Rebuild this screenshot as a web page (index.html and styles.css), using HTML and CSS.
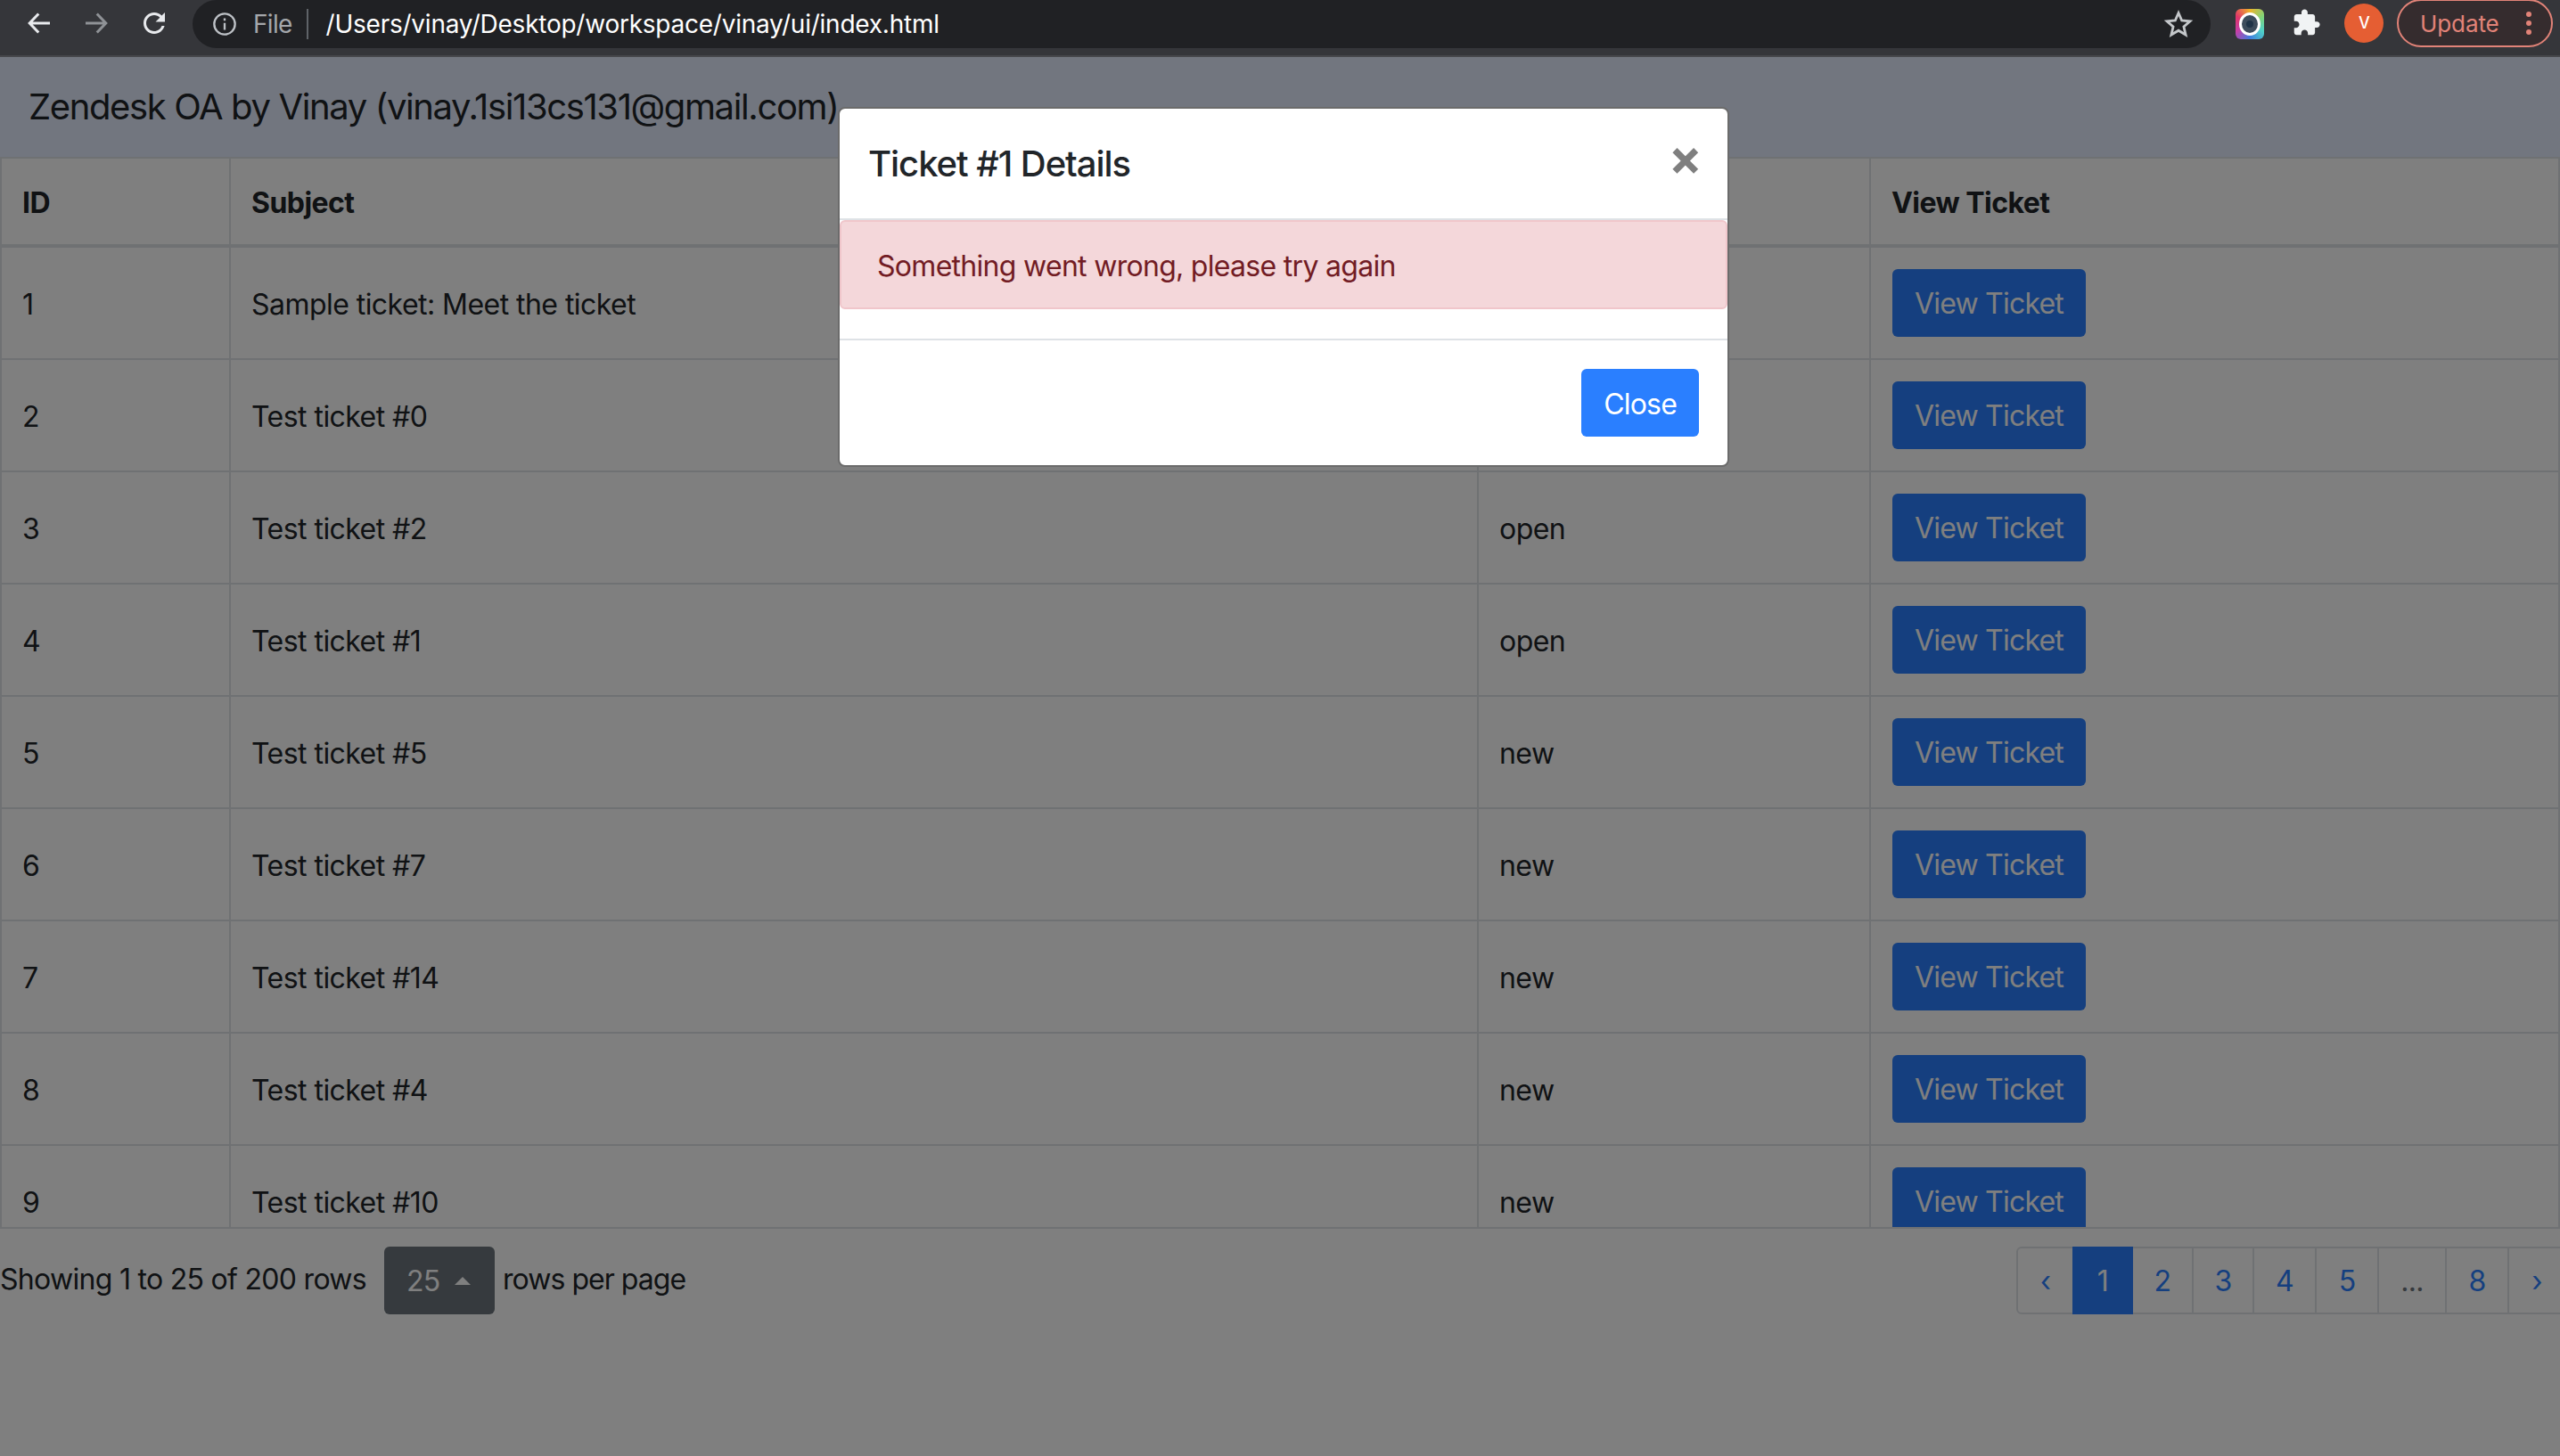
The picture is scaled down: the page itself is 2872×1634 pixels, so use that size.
FILE: index.html
```html
<!DOCTYPE html>
<html lang="en">
<head>
  <meta charset="UTF-8" />
  <title>Zendesk OA by Vinay</title>
  <link rel="stylesheet" href="styles.css">
</head>
<body>
  <div class="toolbar">
    <svg class="nav-icon" viewBox="0 0 24 24"><path d="M20 12H5M11.5 5L4.8 12l6.7 7" fill="none" stroke="#e8eaed" stroke-width="2"/></svg>
    <svg class="nav-icon dim" viewBox="0 0 24 24"><path d="M4 12h15M12.5 5l6.7 7-6.7 7" fill="none" stroke="#8f9296" stroke-width="2"/></svg>
    <svg class="nav-icon" viewBox="0 0 24 24"><path fill="#e8eaed" d="M17.65 6.35C16.2 4.9 14.21 4 12 4c-4.42 0-7.99 3.58-7.99 8s3.57 8 7.99 8c3.73 0 6.84-2.55 7.73-6h-2.08c-.82 2.33-3.04 4-5.65 4-3.31 0-6-2.69-6-6s2.69-6 6-6c1.66 0 3.14.69 4.22 1.78L13 11h7V4l-2.35 2.35z"/></svg>
    <div class="omnibox">
      <svg class="info-icon" viewBox="0 0 24 24"><circle cx="12" cy="12" r="10" fill="none" stroke="#bdc1c6" stroke-width="2"/><path d="M12 11v6.5M12 6.5v2.2" stroke="#bdc1c6" stroke-width="2"/></svg>
      <span class="scheme">File</span>
      <span class="url">/Users/vinay/Desktop/workspace/vinay/ui/index.html</span>
      <svg class="star-icon" viewBox="0 0 24 24"><path d="M12 3.2l2.6 6 6.5.6-4.9 4.3 1.5 6.4L12 17.1l-5.7 3.4 1.5-6.4-4.9-4.3 6.5-.6z" fill="none" stroke="#c4c7ca" stroke-width="2"/></svg>
    </div>
    <div class="ext-icon"><div class="ext-ring"><div class="ext-lens"></div></div></div>
    <svg class="puzzle-icon" viewBox="0 0 24 24"><path fill="#f1f3f4" d="M20.5 11H19V7c0-1.1-.9-2-2-2h-4V3.5C13 2.12 11.88 1 10.5 1S8 2.12 8 3.5V5H4c-1.1 0-1.99.9-1.99 2v3.8H3.5c1.49 0 2.7 1.21 2.7 2.7s-1.21 2.7-2.7 2.7H2V20c0 1.1.9 2 2 2h3.8v-1.5c0-1.49 1.21-2.7 2.7-2.7 1.49 0 2.7 1.21 2.7 2.7V22H17c1.1 0 2-.9 2-2v-4h1.5c1.38 0 2.5-1.12 2.5-2.5S21.88 11 20.5 11z"/></svg>
    <div class="avatar">V</div>
    <div class="update">
      <span>Update</span>
      <div class="dots"><i></i><i></i><i></i></div>
    </div>
  </div>

  <div class="page">
    <div class="navbar">Zendesk OA by Vinay (vinay.1si13cs131@gmail.com)</div>

    <div class="table-wrap">
      <table class="tickets">
        <colgroup>
          <col class="col-id"><col class="col-subject"><col class="col-status"><col>
        </colgroup>
        <thead>
          <tr><th>ID</th><th>Subject</th><th>Status</th><th>View Ticket</th></tr>
        </thead>
        <tbody>
          <tr><td>1</td><td>Sample ticket: Meet the ticket</td><td>open</td><td class="cell-btn"><button class="btn">View Ticket</button></td></tr>
          <tr><td>2</td><td>Test ticket #0</td><td>open</td><td class="cell-btn"><button class="btn">View Ticket</button></td></tr>
          <tr><td>3</td><td>Test ticket #2</td><td>open</td><td class="cell-btn"><button class="btn">View Ticket</button></td></tr>
          <tr><td>4</td><td>Test ticket #1</td><td>open</td><td class="cell-btn"><button class="btn">View Ticket</button></td></tr>
          <tr><td>5</td><td>Test ticket #5</td><td>new</td><td class="cell-btn"><button class="btn">View Ticket</button></td></tr>
          <tr><td>6</td><td>Test ticket #7</td><td>new</td><td class="cell-btn"><button class="btn">View Ticket</button></td></tr>
          <tr><td>7</td><td>Test ticket #14</td><td>new</td><td class="cell-btn"><button class="btn">View Ticket</button></td></tr>
          <tr><td>8</td><td>Test ticket #4</td><td>new</td><td class="cell-btn"><button class="btn">View Ticket</button></td></tr>
          <tr><td>9</td><td>Test ticket #10</td><td>new</td><td class="cell-btn"><button class="btn">View Ticket</button></td></tr>
        </tbody>
      </table>
    </div>

    <div class="table-footer">
      <div class="rows-info">
        <span>Showing 1 to 25 of 200 rows</span>
        <div class="page-size"><span>25</span><i class="caret"></i></div>
        <span>rows per page</span>
      </div>
      <ul class="pagination">
        <li class="end">‹</li>
        <li class="active">1</li>
        <li>2</li>
        <li>3</li>
        <li class="wide">4</li>
        <li class="wide">5</li>
        <li class="gap">...</li>
        <li class="wide">8</li>
        <li class="end">›</li>
      </ul>
    </div>

    <div class="backdrop"></div>

    <div class="modal">
      <div class="modal-header">
        <h5>Ticket #1 Details</h5>
        <span class="modal-x">×</span>
      </div>
      <div class="alert">Something went wrong, please try again</div>
      <div class="modal-body"></div>
      <div class="modal-footer">
        <button class="btn">Close</button>
      </div>
    </div>
  </div>
</body>
</html>
```

FILE: styles.css
```css
* {
  box-sizing: border-box;
}
html, body {
  margin: 0;
  height: 100%;
  overflow: hidden;
}
body {
  font-family: Inter, "Liberation Sans", sans-serif;
  font-size: 32px;
  letter-spacing: -0.022em;
  color: #212529;
  background: #fff;
}

/* browser chrome */
.toolbar {
  display: flex;
  align-items: flex-start;
  height: 64px;
  padding-left: 26px;
  background: #35363a;
  border-bottom: 2px solid #46474b;
}
.nav-icon {
  width: 36px;
  height: 36px;
  margin: 8px 28px 0 0;
  flex: none;
}
.nav-icon.dim {
  margin-right: 29px;
}
.omnibox {
  display: flex;
  align-items: center;
  width: 2264px;
  height: 54px;
  margin-left: -3px;
  padding: 0 19px 0 22px;
  background: #202124;
  border-radius: 27px;
  flex: none;
}
.info-icon {
  width: 28px;
  height: 28px;
  margin-right: 18px;
}
.scheme {
  padding-right: 16px;
  margin-right: 20px;
  font-size: 28px;
  color: #a4a7ab;
  border-right: 2px solid #5f6368;
}
.url {
  flex: 1;
  font-size: 28px;
  letter-spacing: -0.24px;
  color: #fff;
}
.star-icon {
  width: 34px;
  height: 34px;
}
.ext-icon {
  width: 32px;
  height: 34px;
  margin: 10px 0 0 28px;
  padding: 4px;
  border-radius: 6px;
  background: conic-gradient(#f0b429, #7fd47a, #4fd0c8, #3f7de0, #c53fa8, #e0356a, #f0b429);
  flex: none;
}
.ext-ring {
  width: 24px;
  height: 26px;
  border: 3px solid #fff;
  border-radius: 50%;
  background: #3d4c5c;
  display: flex;
  align-items: center;
  justify-content: center;
}
.ext-lens {
  width: 8px;
  height: 8px;
  border-radius: 50%;
  background: #1f3347;
}
.puzzle-icon {
  width: 33px;
  height: 33px;
  margin: 9px 0 0 31px;
  flex: none;
}
.avatar {
  width: 44px;
  height: 44px;
  margin: 4px 0 0 26px;
  border-radius: 50%;
  background: #e55e33;
  color: #fff;
  font-size: 18px;
  font-weight: 500;
  text-align: center;
  line-height: 44px;
  flex: none;
}
.update {
  display: flex;
  align-items: center;
  justify-content: space-between;
  width: 175px;
  height: 54px;
  margin: -1px 0 0 15px;
  padding: 0 22px 0 24px;
  border: 2px solid #e28378;
  border-radius: 27px;
  background: #352c2e;
  color: #e28378;
  font-size: 26px;
  letter-spacing: -0.1px;
  flex: none;
}
.dots {
  display: flex;
  flex-direction: column;
  gap: 4px;
}
.dots i {
  display: block;
  width: 6px;
  height: 6px;
  border-radius: 50%;
  background: #e28378;
}

/* page */
.page {
  position: relative;
  height: 1570px;
}
.navbar {
  height: 112px;
  padding: 0 32px;
  font-size: 40px;
  letter-spacing: -1.38px;
  line-height: 112px;
  background: #e5ecff;
}
.table-wrap {
  height: 1203px;
  overflow: hidden;
  border-bottom: 2px solid #dee2e6;
}
.tickets {
  width: 100%;
  table-layout: fixed;
  border-collapse: collapse;
  letter-spacing: -0.017em;
}
.col-id {
  width: 257px;
}
.col-subject {
  width: 1400px;
}
.col-status {
  width: 440px;
}
.tickets th, .tickets td {
  padding: 26px 24px 22px 23px;
  border: 2px solid #dee2e6;
  text-align: left;
  vertical-align: middle;
  line-height: 48px;
}
.tickets th {
  font-weight: 700;
  border-bottom-width: 4px;
}
.tickets .cell-btn {
  padding: 24px;
}
.btn {
  display: block;
  height: 76px;
  padding: 2px 25px 0;
  border: 0;
  border-radius: 6px;
  background: #2a7fff;
  color: #fff;
  font: inherit;
  letter-spacing: -0.025em;
}

.table-footer {
  display: flex;
  justify-content: space-between;
  margin-top: 20px;
}
.rows-info {
  display: flex;
  align-items: center;
  height: 76px;
}
.rows-info > span {
  margin-top: -4px;
}
.page-size {
  display: flex;
  align-items: center;
  width: 124px;
  height: 76px;
  margin: 0 9px 0 20px;
  padding-left: 25px;
  border-radius: 6px;
  background: #6c757d;
  color: #fff;
}
.rows-info > span:last-child {
  letter-spacing: -0.03em;
}
.caret {
  margin-left: 16px;
  border-left: 9px solid transparent;
  border-right: 9px solid transparent;
  border-bottom: 9px solid #fff;
}
.pagination {
  display: flex;
  height: 76px;
  margin: 0 -7px 0 0;
  padding: 0;
  list-style: none;
  color: #2a7fff;
}
.pagination li {
  width: 70px;
  margin-left: -2px;
  border: 2px solid #dee2e6;
  text-align: center;
  line-height: 74px;
}
.pagination .wide {
  width: 72px;
}
.pagination .end {
  width: 66px;
}
.pagination .end:first-child {
  width: 65px;
  margin-left: 0;
  border-radius: 6px 0 0 6px;
}
.pagination .active {
  position: relative;
  width: 68px;
  background: #2a7fff;
  border-color: #2a7fff;
  color: #fff;
}
.pagination .gap {
  width: 78px;
  color: #6c757d;
}

/* modal */
.backdrop {
  position: absolute;
  inset: 0;
  background: rgba(0, 0, 0, 0.5);
}
.modal {
  position: absolute;
  top: 56px;
  left: 940px;
  width: 1000px;
  height: 404px;
  border: 2px solid #6b6b6b;
  border-radius: 8px;
  background: #fff;
}
.modal-header {
  display: flex;
  align-items: center;
  justify-content: space-between;
  height: 125px;
  padding: 0 32px;
  border-bottom: 2px solid #dee2e6;
}
.modal-header h5 {
  margin: 0;
  font-size: 40px;
  font-weight: 500;
  letter-spacing: -1.05px;
}
.modal-x {
  margin: -14px -3px 0 0;
  font-size: 56px;
  font-weight: 700;
  color: #7f7f7f;
  line-height: 1;
}
.alert {
  height: 100px;
  padding: 0 40px;
  line-height: 100px;
  color: #721c24;
  background: #f4d7da;
  border: 2px solid #f0c6cb;
  border-radius: 6px;
}
.modal-body {
  height: 35px;
  border-bottom: 2px solid #dee2e6;
}
.modal-footer {
  display: flex;
  justify-content: flex-end;
  padding: 32px 32px 0;
}
```
